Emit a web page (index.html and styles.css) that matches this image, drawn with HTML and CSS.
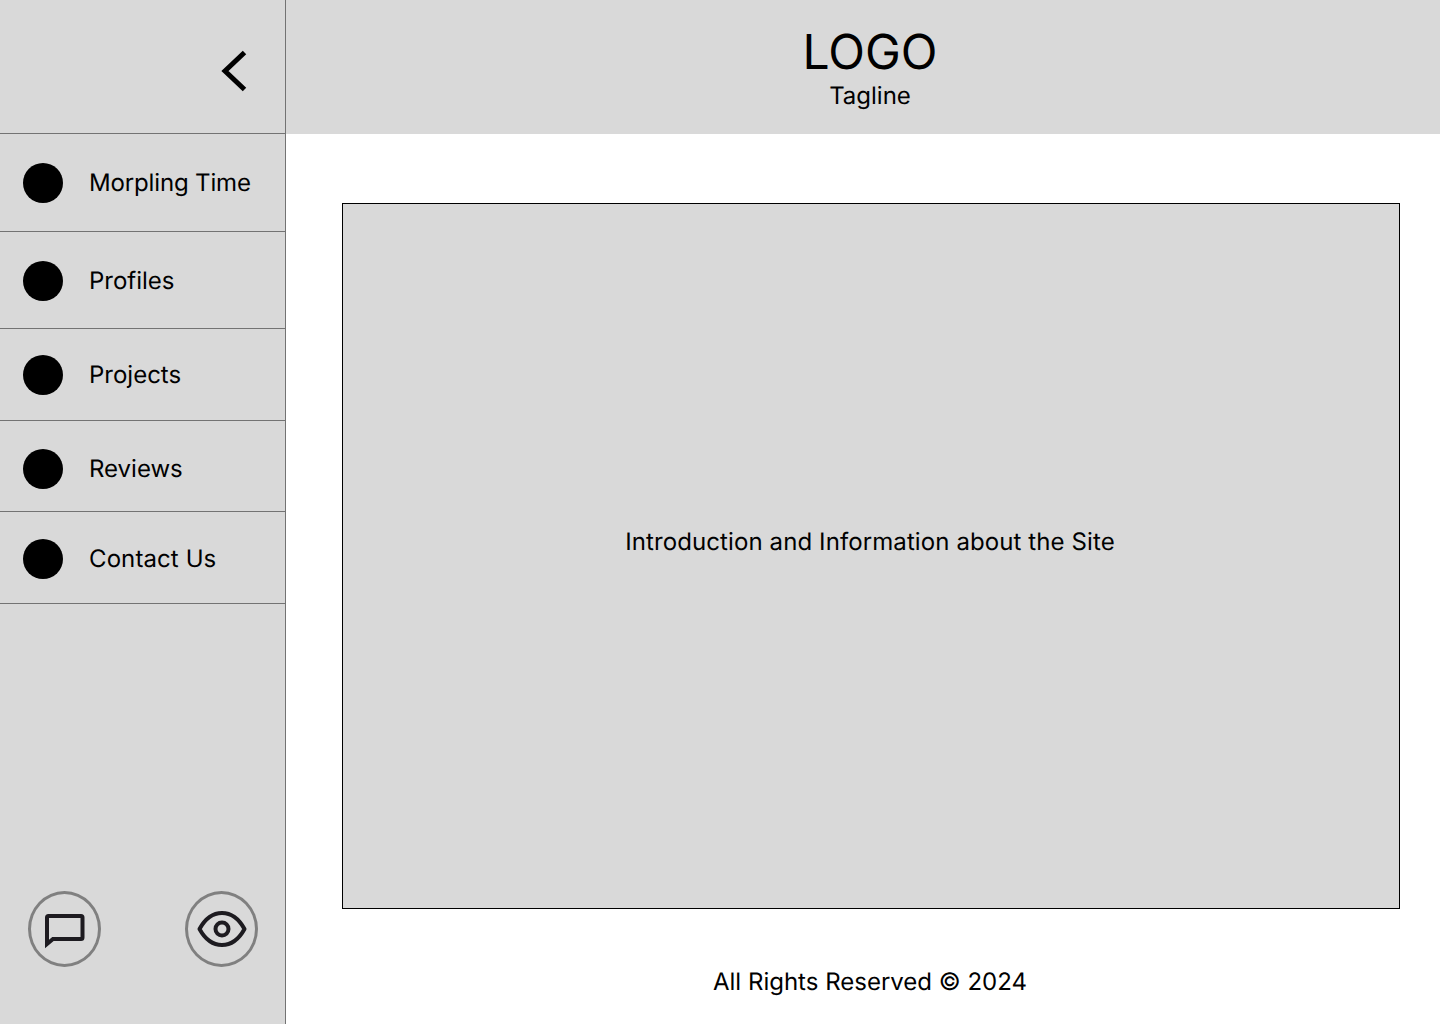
FILE: index.html
```html
<!DOCTYPE html>
<html lang="en">
  <head>
    <meta charset="UTF-8" />
    <meta name="viewport" content="width=device-width, initial-scale=1.0" />
    <title>Morpling Time</title>
    <link rel="stylesheet" href="styles.css">
  </head>
  <body>
    <div class="page">
      <aside class="sidebar">
        <div class="sidebar-top">
          <svg class="collapse-icon" width="28" height="44" viewBox="0 0 28 44" aria-hidden="true">
            <path d="M23.5 3.5 L4 22 L23.5 40.5" />
          </svg>
        </div>
        <nav class="nav">
          <a class="nav-item item-1" href="#"><span class="dot"></span>Morpling Time</a>
          <a class="nav-item item-2" href="#"><span class="dot"></span>Profiles</a>
          <a class="nav-item item-3" href="#"><span class="dot"></span>Projects</a>
          <a class="nav-item item-4" href="#"><span class="dot"></span>Reviews</a>
          <a class="nav-item item-5" href="#"><span class="dot"></span>Contact Us</a>
        </nav>
        <div class="sidebar-actions">
          <button class="round-btn" type="button" aria-label="Chat">
            <svg class="chat-icon" width="40" height="36" viewBox="0 0 40 36" aria-hidden="true">
              <path d="M2 30 V3.500 Q2 2 3.500 2 H36 Q37.500 2 37.500 3.500 V23.500 Q37.500 25 36 25 H8 Z" />
            </svg>
          </button>
          <button class="round-btn" type="button" aria-label="View">
            <svg width="50" height="38" viewBox="0 0 50 38" aria-hidden="true">
              <path d="M2.500 19 C8 9 15.500 3 25 3 C34.500 3 42 9 47.500 19 C42 29 34.500 35 25 35 C15.500 35 8 29 2.500 19 Z" />
              <circle cx="25" cy="19" r="6.500" />
            </svg>
          </button>
        </div>
      </aside>
      <div class="content">
        <header class="top-bar">
          <h1 class="logo">LOGO</h1>
          <p class="tagline">Tagline</p>
        </header>
        <main class="main">
          <section class="intro">Introduction and Information about the Site</section>
        </main>
        <footer class="footer">All Rights Reserved © 2024</footer>
      </div>
    </div>
  </body>
</html>
```

FILE: styles.css
```css
*, *:before, *:after {
  box-sizing: border-box;
}
body {
  margin: 0;
  background-color: #fff;
  color: #000;
  font-family: Inter, "Liberation Sans", sans-serif;
  text-rendering: geometricPrecision;
}
.page {
  display: flex;
  height: 1024px;
  overflow: hidden;
}

/* sidebar */
.sidebar {
  display: flex;
  flex-direction: column;
  flex: 0 0 286px;
  background-color: #d9d9d9;
  border-right: 1px solid #737373;
}
.sidebar-top {
  display: flex;
  justify-content: flex-end;
  height: 134px;
  padding: 49px 36px 0 0;
  border-bottom: 1px solid #737373;
}
.collapse-icon path {
  fill: none;
  stroke: #000;
  stroke-width: 5;
}
.nav {
  display: flex;
  flex-direction: column;
}
.nav-item {
  display: flex;
  align-items: flex-start;
  gap: 26px;
  padding-left: 23px;
  border-bottom: 1px solid #737373;
  color: #000;
  font-size: 24px;
  line-height: 40px;
  text-decoration: none;
}
.item-1 {
  height: 98px;
  padding-top: 29px;
  letter-spacing: -0.15px;
}
.item-2 {
  height: 97px;
  padding-top: 29px;
}
.item-3 {
  height: 92px;
  padding-top: 26px;
}
.item-4 {
  height: 91px;
  padding-top: 28px;
}
.item-5 {
  height: 92px;
  padding-top: 27px;
  letter-spacing: 0.1px;
}
.dot {
  flex: 0 0 40px;
  height: 40px;
  border-radius: 50%;
  background-color: #000;
}
.sidebar-actions {
  display: flex;
  justify-content: space-between;
  margin-top: auto;
  padding: 0 27px 57px 28px;
}
.round-btn {
  display: flex;
  align-items: center;
  justify-content: center;
  width: 73px;
  height: 76px;
  padding: 0;
  background: transparent;
  border: 3px solid #808080;
  border-radius: 50%;
}
.round-btn svg {
  fill: none;
  stroke: #1d1b20;
  stroke-width: 4;
  stroke-linejoin: round;
}
.round-btn .chat-icon {
  margin-top: 6px;
  stroke-linejoin: miter;
}

/* main area */
.content {
  display: flex;
  flex-direction: column;
  flex: 1;
}
.top-bar {
  height: 134px;
  padding: 24px 0 0 14px;
  background-color: #d9d9d9;
  text-align: center;
}
.logo {
  margin: 0;
  font-size: 48px;
  font-weight: 400;
  line-height: 56px;
}
.tagline {
  margin: 0;
  font-size: 24px;
  line-height: 32px;
}
.main {
  padding: 69px 40px 0 56px;
}
.intro {
  display: flex;
  align-items: center;
  justify-content: center;
  height: 706px;
  padding: 0 2px 30px 0;
  background-color: #d9d9d9;
  border: 1px solid #000;
  font-size: 24px;
  letter-spacing: 0.1px;
}
.footer {
  padding: 57px 0 0 14px;
  font-size: 24px;
  line-height: 32px;
  text-align: center;
}
```
